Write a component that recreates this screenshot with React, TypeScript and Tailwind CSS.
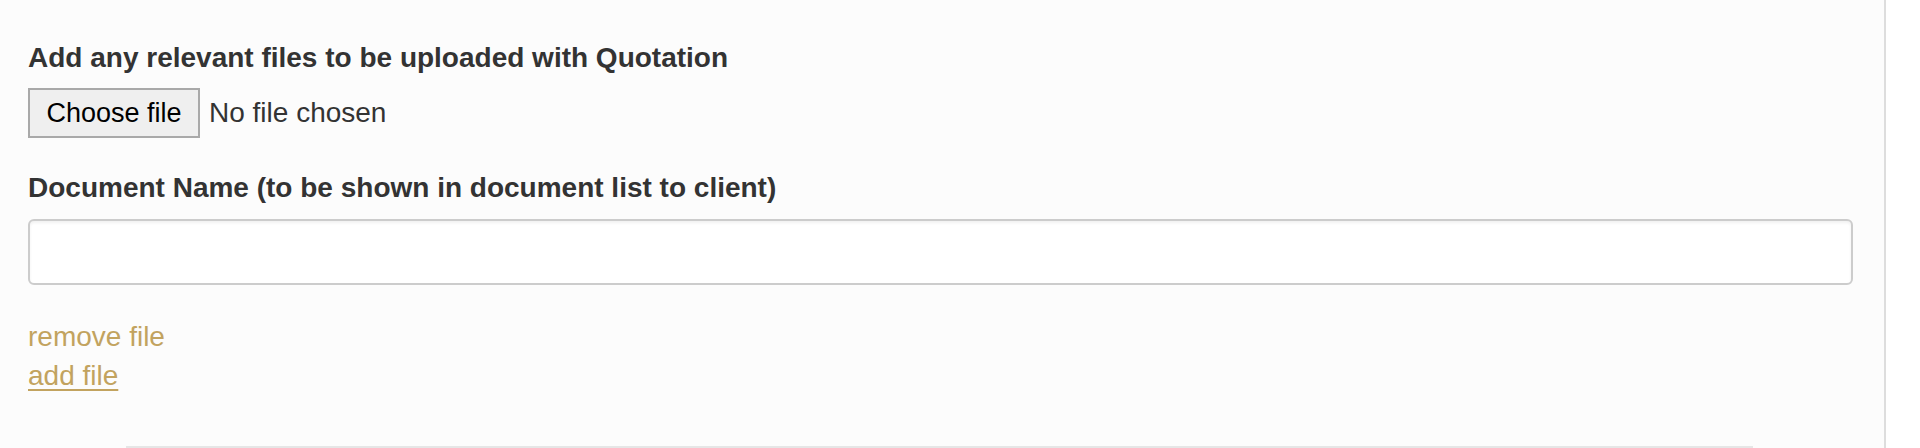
export default function App() {
  return (
    <div
      className="flex h-[448px] w-[1920px] overflow-hidden bg-white"
      style={{ fontFamily: '"Liberation Sans", Arial, Helvetica, sans-serif' }}
    >
      {/* main form column */}
      <div className="flex w-[1884px] flex-col bg-[#fcfcfc] pl-[28px] pr-[31px] pt-[38px]">
        <label className="text-[28px] font-bold leading-[40px] text-[#333]">
          Add any relevant files to be uploaded with Quotation
        </label>

        <div className="mt-[10px] flex items-center">
          <button
            type="button"
            className="h-[50px] w-[172px] border-2 border-[#a9a9a9] bg-[#efefef] text-[27px] leading-none text-black"
          >
            Choose file
          </button>
          <span className="ml-[9px] text-[28px] leading-[40px] text-[#333]">No file chosen</span>
        </div>

        <label className="mt-[30px] text-[28px] font-bold leading-[40px] text-[#333]">
          Document Name (to be shown in document list to client)
        </label>

        <input
          type="text"
          className="mt-[11px] h-[66px] w-full rounded-[6px] border-2 border-[#cccccc] bg-white shadow-[inset_0_2px_3px_rgba(0,0,0,0.06)] outline-none"
        />

        <div className="mt-[32px] flex flex-col items-start text-[28px] leading-[39px] text-[#c2a35f]">
          <a className="cursor-pointer">remove file</a>
          <a className="cursor-pointer underline decoration-2 underline-offset-[4px]">add file</a>
        </div>

        <div className="ml-[98px] mt-[51px] h-[2px] w-[1627px] bg-[#e6e6e6]" />
      </div>

      {/* right rail */}
      <div className="w-[2px] bg-[#dddddd]" />
      <div className="flex-1 bg-white" />
    </div>
  );
}
